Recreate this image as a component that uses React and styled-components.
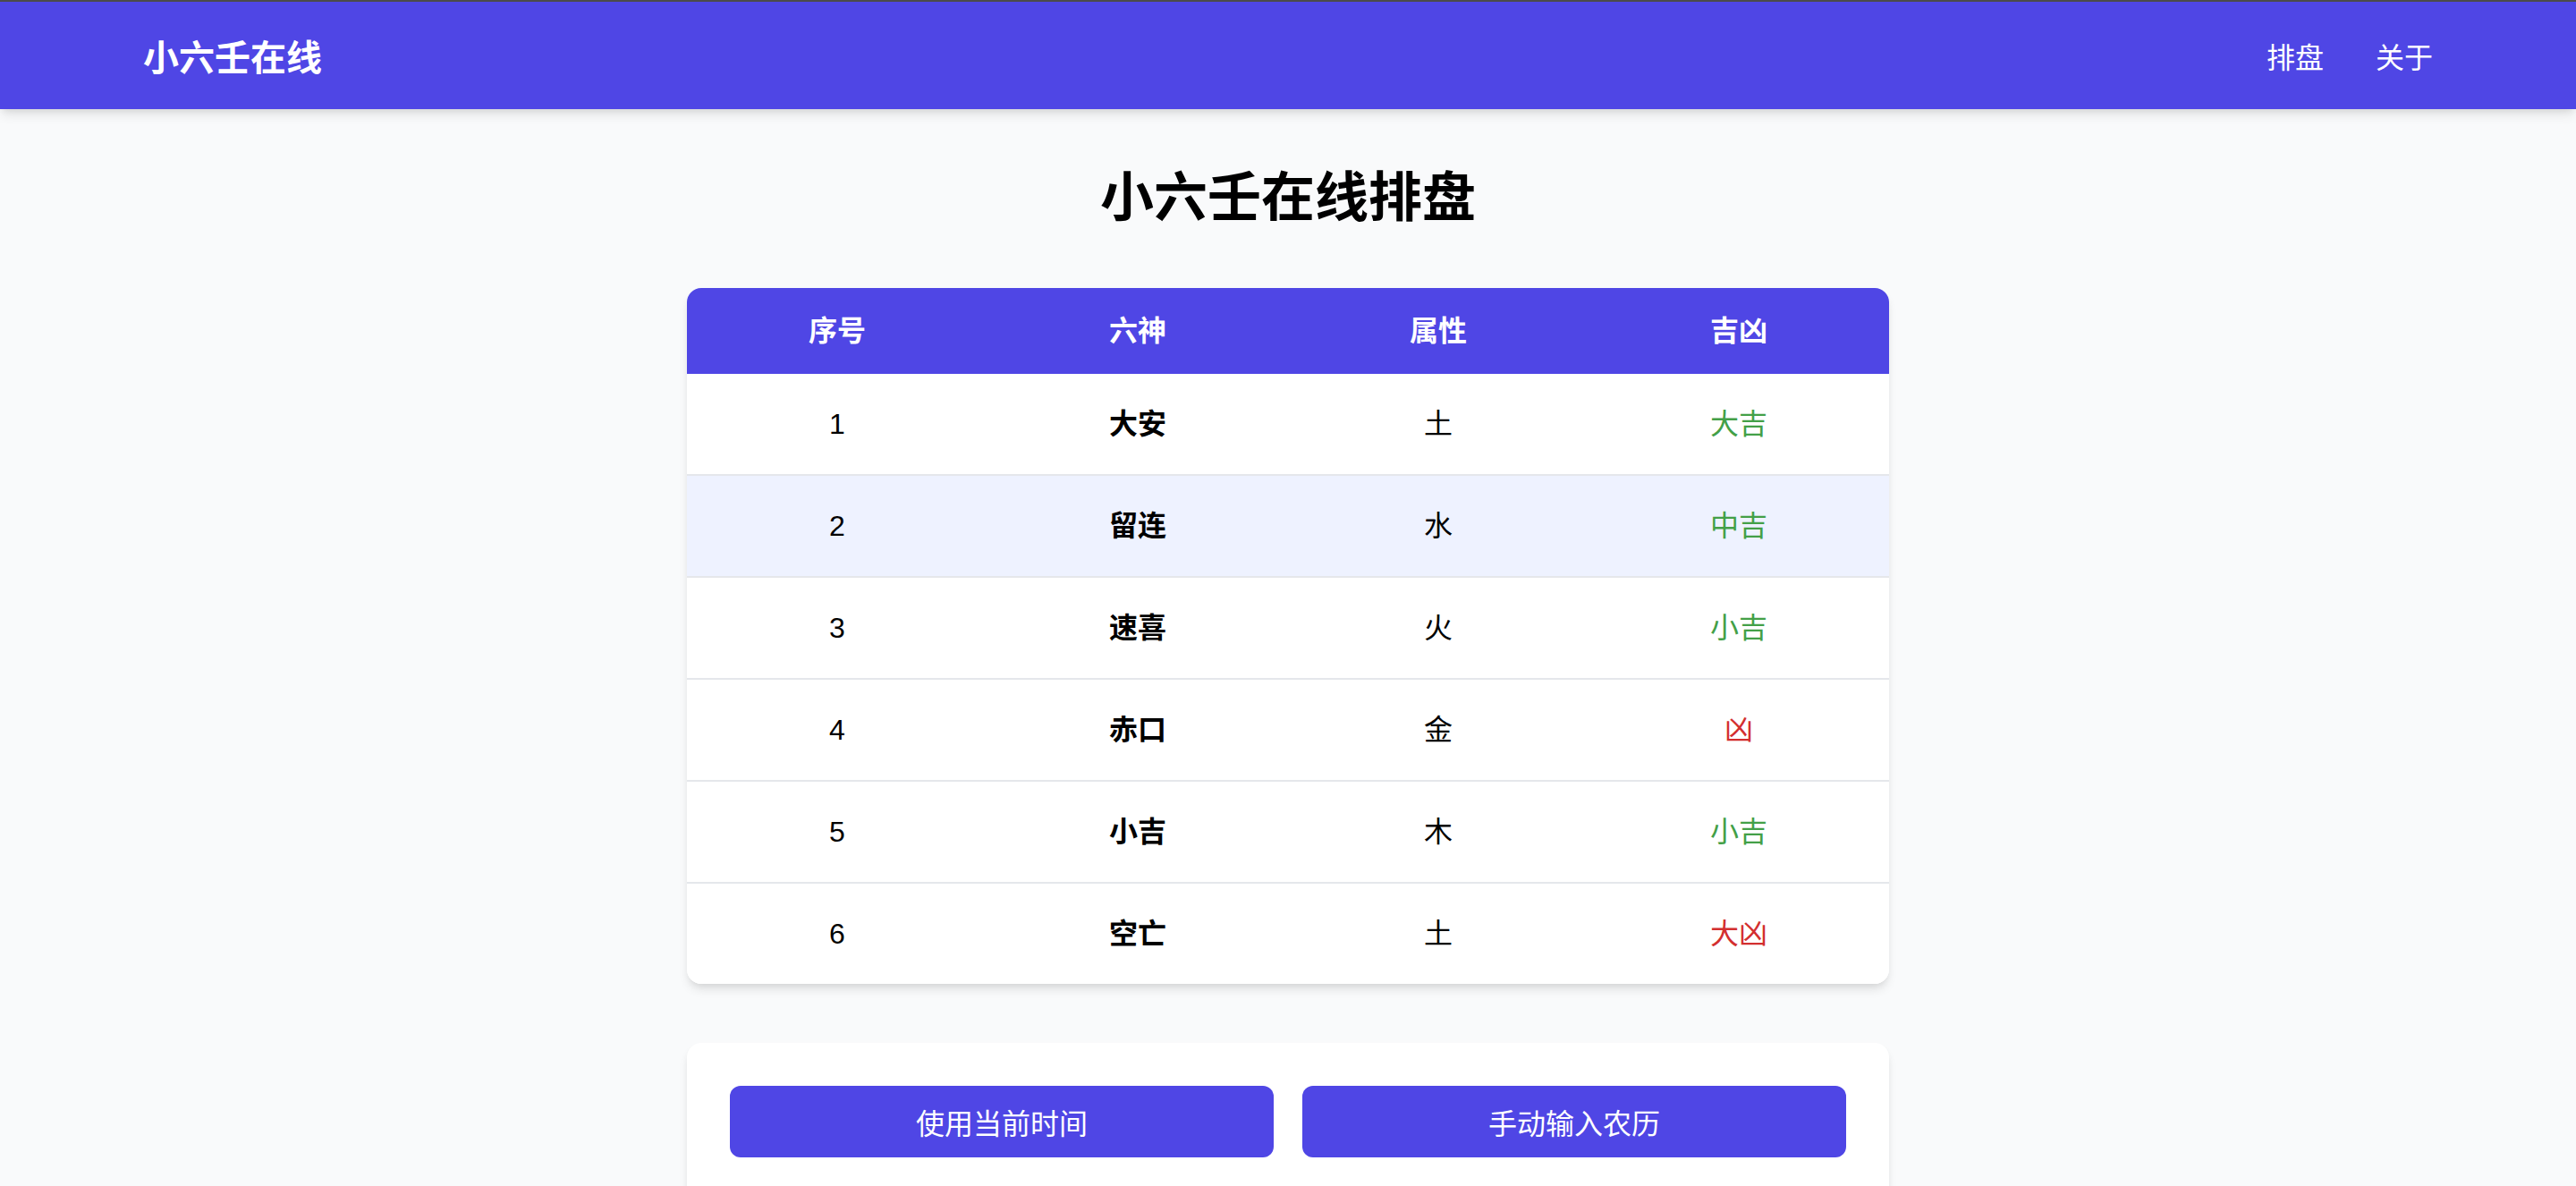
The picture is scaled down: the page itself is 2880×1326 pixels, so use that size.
import styled, { createGlobalStyle } from 'styled-components'

const GlobalStyle = createGlobalStyle`
    html, body {
        margin: 0;
        padding: 0;
        background-color: #f9fafb;
        font-family: "Liberation Sans", "Noto Sans CJK SC", sans-serif;
        color: #000;
    }
`

const rows = [
    { id: 1, god: '大安', element: '土', luck: '大吉', good: true },
    { id: 2, god: '留连', element: '水', luck: '中吉', good: true },
    { id: 3, god: '速喜', element: '火', luck: '小吉', good: true },
    { id: 4, god: '赤口', element: '金', luck: '凶', good: false },
    { id: 5, god: '小吉', element: '木', luck: '小吉', good: true },
    { id: 6, god: '空亡', element: '土', luck: '大凶', good: false },
]

const App = () => {
    return(
        <>
            <GlobalStyle />
            <Header>
                <HeaderInner>
                    <Logo>小六壬在线</Logo>
                    <Menu>
                        <MenuLink href="#">排盘</MenuLink>
                        <MenuLink href="#">关于</MenuLink>
                    </Menu>
                </HeaderInner>
            </Header>
            <Main>
                <Title>小六壬在线排盘</Title>
                <TableCard>
                    <Table>
                        <thead>
                            <tr>
                                <Th>序号</Th>
                                <Th>六神</Th>
                                <Th>属性</Th>
                                <Th>吉凶</Th>
                            </tr>
                        </thead>
                        <tbody>
                            {rows.map((r) => (
                                <Row key={r.id} $alt={r.id === 2}>
                                    <Td>{r.id}</Td>
                                    <Td $bold>{r.god}</Td>
                                    <Td>{r.element}</Td>
                                    <Td $color={r.good ? '#43a047' : '#d32f2f'}>{r.luck}</Td>
                                </Row>
                            ))}
                        </tbody>
                    </Table>
                </TableCard>
                <ActionCard>
                    <Button>使用当前时间</Button>
                    <Button>手动输入农历</Button>
                </ActionCard>
            </Main>
        </>
    )
};

const Header = styled.header`
    background-color: #4f46e5;
    border-top: 2px solid #4b4b4b;
    height: 120px;
    box-shadow: 0 8px 12px -2px rgba(0, 0, 0, 0.1), 0 4px 8px -4px rgba(0, 0, 0, 0.1);
    position: relative;
    z-index: 1;
`
const HeaderInner = styled.div`
    max-width: 2560px;
    height: 100%;
    margin: 0 auto;
    display: flex;
    align-items: center;
    justify-content: space-between;
`
const Logo = styled.div`
    color: white;
    font-size: 40px;
    font-weight: 700;
`
const Menu = styled.nav`
    display: flex;
    column-gap: 58px;
`
const MenuLink = styled.a`
    color: white;
    font-size: 32px;
    text-decoration: none;
`
const Main = styled.main`
    width: 1344px;
    margin: 0 auto;
    padding-top: 64px;
`
const Title = styled.h1`
    margin: 0 0 64px;
    text-align: center;
    font-size: 60px;
    line-height: 72px;
    font-weight: 700;
`
const TableCard = styled.div`
    background-color: white;
    border-radius: 16px;
    overflow: hidden;
    box-shadow: 0 8px 12px -2px rgba(0, 0, 0, 0.1), 0 4px 8px -4px rgba(0, 0, 0, 0.1);
`
const Table = styled.table`
    width: 100%;
    border-collapse: collapse;
    table-layout: fixed;
`
const Th = styled.th`
    background-color: #4f46e5;
    color: white;
    font-size: 32px;
    font-weight: 700;
    line-height: 48px;
    padding: 24px 0;
`
const Row = styled.tr`
    background-color: ${(p) => (p.$alt ? '#eef2ff' : 'white')};
    border-bottom: 2px solid #e5e7eb;
    &:last-child {
        border-bottom: none;
    }
`
const Td = styled.td`
    text-align: center;
    font-size: 32px;
    line-height: 48px;
    padding: 32px 0;
    font-weight: ${(p) => (p.$bold ? 700 : 400)};
    color: ${(p) => p.$color || '#000'};
`
const ActionCard = styled.div`
    margin-top: 66px;
    background-color: white;
    border-radius: 16px;
    padding: 48px;
    display: grid;
    grid-template-columns: 1fr 1fr;
    column-gap: 32px;
    box-shadow: 0 8px 12px -2px rgba(0, 0, 0, 0.1), 0 4px 8px -4px rgba(0, 0, 0, 0.1);
`
const Button = styled.button`
    height: 80px;
    border: none;
    border-radius: 12px;
    background-color: #4f46e5;
    color: white;
    font-family: inherit;
    font-size: 32px;
    cursor: pointer;
`
export default App;
